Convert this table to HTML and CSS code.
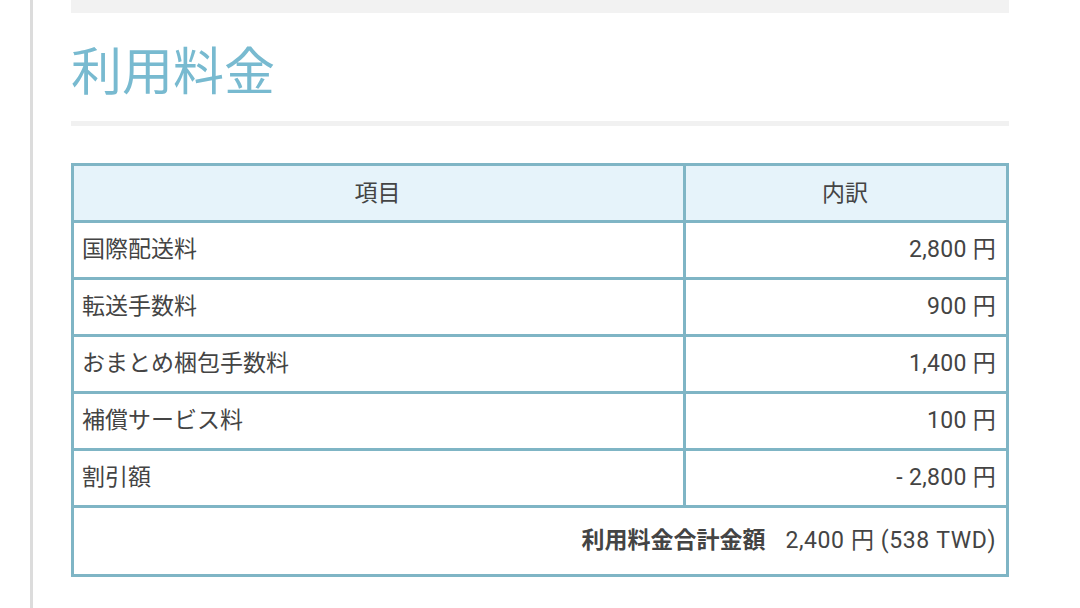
FILE: index.html
```html
<!DOCTYPE html>
<html lang="ja">
<head>
    <meta charset="UTF-8">
    <meta name="viewport" content="width=device-width, initial-scale=1.0">
    <title>利用料金</title>
    <link rel="stylesheet" href="styles.css">
</head>
<body>

    <div class="page">
        <!-- 前のセクションの下端 -->
        <div class="prev-box"></div>

        <section class="fee-section">
            <h2 class="section-title">利用料金</h2>

            <table class="fee-table">
                <thead>
                    <tr>
                        <th class="col-item">項目</th>
                        <th class="col-amount">内訳</th>
                    </tr>
                </thead>
                <tbody>
                    <tr>
                        <td>国際配送料</td>
                        <td class="amount">2,800 円</td>
                    </tr>
                    <tr>
                        <td>転送手数料</td>
                        <td class="amount">900 円</td>
                    </tr>
                    <tr>
                        <td>おまとめ梱包手数料</td>
                        <td class="amount">1,400 円</td>
                    </tr>
                    <tr>
                        <td>補償サービス料</td>
                        <td class="amount">100 円</td>
                    </tr>
                    <tr>
                        <td>割引額</td>
                        <td class="amount">- 2,800 円</td>
                    </tr>
                    <tr class="total-row">
                        <td colspan="2"><strong>利用料金合計金額</strong><span class="total-value">2,400 円 (538 TWD)</span></td>
                    </tr>
                </tbody>
            </table>
        </section>
    </div>

</body>
</html>
```

FILE: styles.css
```css
/* 全体 */
body {
    margin: 0;
    background-color: #fff;
    font-family: Roboto, "Noto Sans CJK JP", "Noto Sans", sans-serif;
    color: #444;
}

.page {
    margin-left: 30px;
    width: 1014px;
    min-height: 608px;
    border-left: 3px solid #dcdcdc;
    border-right: 3px solid #dcdcdc;
    padding: 0 38px;
    box-sizing: content-box;
}

.page > * {
    width: 938px;
}

.prev-box {
    height: 13px;
    background-color: #f2f2f2;
}

/* 見出し */
.section-title {
    margin: 0;
    padding-top: 28px;
    padding-bottom: 16px;
    font-size: 51px;
    line-height: 64px;
    font-weight: normal;
    color: #78bad0;
    border-bottom: 5px solid #f1f1f1;
}

/* テーブル */
.fee-table {
    width: 100%;
    margin-top: 37px;
    border-collapse: collapse;
    border: 3px solid #7fb5c5;
    font-size: 23px;
    line-height: 30px;
}

.fee-table th,
.fee-table td {
    border: 3px solid #7fb5c5;
    padding: 12px 10px 12px 8px;
}

.fee-table th {
    background-color: #e6f3fa;
    font-weight: normal;
    text-align: center;
    padding-top: 13px;
    padding-bottom: 11px;
}

.col-item {
    width: 591px;
}

.amount {
    text-align: right;
    letter-spacing: 0.3px;
}

.total-row td {
    text-align: right;
    padding-top: 18px;
    padding-bottom: 18px;
}

.total-row strong {
    font-weight: bold;
    margin-right: 20px;
}

.total-value {
    letter-spacing: 0.6px;
}
```
